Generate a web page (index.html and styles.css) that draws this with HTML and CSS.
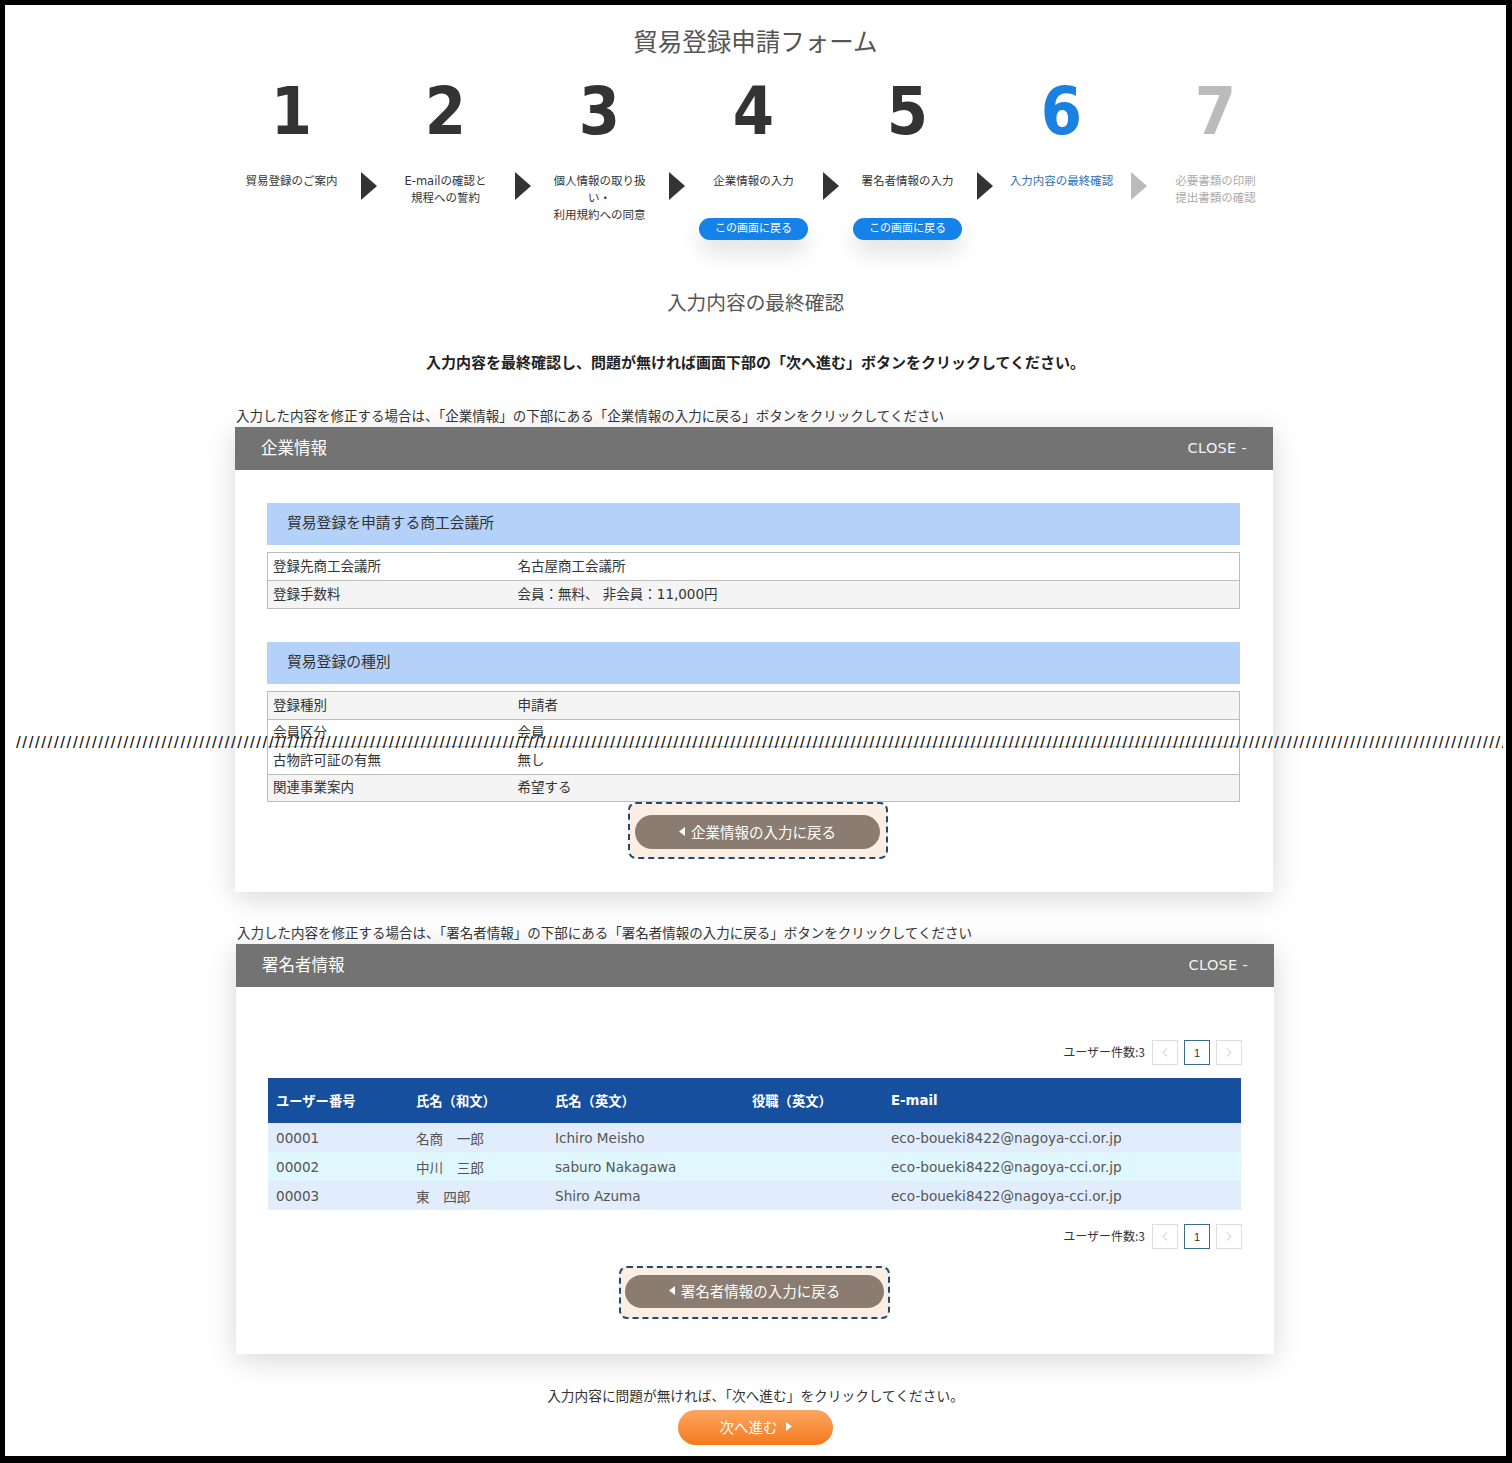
FILE: index.html
```html
<!DOCTYPE html>
<html lang="ja">
<head>
<meta charset="utf-8">
<title>貿易登録申請フォーム</title>
<link rel="stylesheet" href="styles.css">
</head>
<body>
<div class="frame">
  <h1 class="title">貿易登録申請フォーム</h1>

  <ol class="steps">
    <li class="step"><span class="num">1</span><span class="label">貿易登録のご案内</span></li>
    <li class="arrow"><svg width="16" height="28" viewBox="0 0 16 28"><polygon points="0,0 16,14 0,28"/></svg></li>
    <li class="step"><span class="num">2</span><span class="label">E-mailの確認と<br>規程への誓約</span></li>
    <li class="arrow"><svg width="16" height="28" viewBox="0 0 16 28"><polygon points="0,0 16,14 0,28"/></svg></li>
    <li class="step"><span class="num">3</span><span class="label">個人情報の取り扱<br>い・<br>利用規約への同意</span></li>
    <li class="arrow"><svg width="16" height="28" viewBox="0 0 16 28"><polygon points="0,0 16,14 0,28"/></svg></li>
    <li class="step"><span class="num">4</span><span class="label">企業情報の入力</span><a class="step-back">この画面に戻る</a></li>
    <li class="arrow"><svg width="16" height="28" viewBox="0 0 16 28"><polygon points="0,0 16,14 0,28"/></svg></li>
    <li class="step"><span class="num">5</span><span class="label">署名者情報の入力</span><a class="step-back">この画面に戻る</a></li>
    <li class="arrow"><svg width="16" height="28" viewBox="0 0 16 28"><polygon points="0,0 16,14 0,28"/></svg></li>
    <li class="step current"><span class="num">6</span><span class="label">入力内容の最終確認</span></li>
    <li class="arrow pending"><svg width="16" height="28" viewBox="0 0 16 28"><polygon points="0,0 16,14 0,28"/></svg></li>
    <li class="step pending"><span class="num">7</span><span class="label">必要書類の印刷<br>提出書類の確認</span></li>
  </ol>

  <h2 class="subtitle">入力内容の最終確認</h2>
  <p class="lead">入力内容を最終確認し、問題が無ければ画面下部の「次へ進む」ボタンをクリックしてください。</p>

  <section class="block">
    <p class="note">入力した内容を修正する場合は、「企業情報」の下部にある「企業情報の入力に戻る」ボタンをクリックしてください</p>
    <div class="panel">
      <div class="panel-head"><span class="panel-title">企業情報</span><span class="close">CLOSE -</span></div>
      <div class="panel-body">
        <h3 class="sec-head">貿易登録を申請する商工会議所</h3>
        <table class="info">
          <tr class="white"><th>登録先商工会議所</th><td>名古屋商工会議所</td></tr>
          <tr class="gray"><th>登録手数料</th><td>会員：無料、 非会員：11,000円</td></tr>
        </table>
        <h3 class="sec-head second">貿易登録の種別</h3>
        <table class="info compact">
          <tr class="gray"><th>登録種別</th><td>申請者</td></tr>
          <tr class="white"><th>会員区分</th><td>会員</td></tr>
          <tr class="white"><th>古物許可証の有無</th><td>無し</td></tr>
          <tr class="gray"><th>関連事業案内</th><td>希望する</td></tr>
        </table>
        <div class="back-wrap one">
          <button class="back"><svg width="6" height="9" viewBox="0 0 6 9"><polygon points="6,0 0,4.5 6,9"/></svg>企業情報の入力に戻る</button>
        </div>
      </div>
    </div>
  </section>

  <section class="block second-block">
    <p class="note">入力した内容を修正する場合は、「署名者情報」の下部にある「署名者情報の入力に戻る」ボタンをクリックしてください</p>
    <div class="panel">
      <div class="panel-head"><span class="panel-title">署名者情報</span><span class="close">CLOSE -</span></div>
      <div class="panel-body signer">
        <div class="pager">
          <span class="count">ユーザー件数:3</span>
          <span class="pg"><svg width="6" height="9" viewBox="0 0 6 9"><polyline points="5,0.5 1,4.5 5,8.5"/></svg></span>
          <span class="pg active">1</span>
          <span class="pg"><svg width="6" height="9" viewBox="0 0 6 9"><polyline points="1,0.5 5,4.5 1,8.5"/></svg></span>
        </div>
        <table class="users">
          <thead>
            <tr><th class="c1">ユーザー番号</th><th class="c2">氏名（和文）</th><th class="c3">氏名（英文）</th><th class="c4">役職（英文）</th><th>E-mail</th></tr>
          </thead>
          <tbody>
            <tr class="r-blue"><td>00001</td><td>名商　一郎</td><td>Ichiro Meisho</td><td></td><td>eco-boueki8422@nagoya-cci.or.jp</td></tr>
            <tr class="r-cyan"><td>00002</td><td>中川　三郎</td><td>saburo Nakagawa</td><td></td><td>eco-boueki8422@nagoya-cci.or.jp</td></tr>
            <tr class="r-blue"><td>00003</td><td>東　四郎</td><td>Shiro Azuma</td><td></td><td>eco-boueki8422@nagoya-cci.or.jp</td></tr>
          </tbody>
        </table>
        <div class="pager bottom">
          <span class="count">ユーザー件数:3</span>
          <span class="pg"><svg width="6" height="9" viewBox="0 0 6 9"><polyline points="5,0.5 1,4.5 5,8.5"/></svg></span>
          <span class="pg active">1</span>
          <span class="pg"><svg width="6" height="9" viewBox="0 0 6 9"><polyline points="1,0.5 5,4.5 1,8.5"/></svg></span>
        </div>
        <div class="back-wrap two">
          <button class="back"><svg width="6" height="9" viewBox="0 0 6 9"><polygon points="6,0 0,4.5 6,9"/></svg>署名者情報の入力に戻る</button>
        </div>
      </div>
    </div>
  </section>

  <p class="final-note">入力内容に問題が無ければ、「次へ進む」をクリックしてください。</p>
  <div class="next-wrap">
    <button class="next">次へ進む<svg width="6" height="9" viewBox="0 0 6 9"><polygon points="0,0 6,4.5 0,9"/></svg></button>
  </div>

  <div class="cutline">////////////////////////////////////////////////////////////////////////////////////////////////////////////////////////////////////////////////////////////////////////////////////////////////////////////////////////////////////////////////////////////////</div>
</div>
</body>
</html>
```

FILE: styles.css
```css
html, body {
  margin: 0;
  padding: 0;
  background: #000;
}
body {
  width: 1512px;
  height: 1463px;
  overflow: hidden;
  font-family: "DejaVu Sans", "Noto Sans CJK JP", sans-serif;
  color: #333;
}
.frame {
  position: relative;
  margin: 5px 6px 7px 5px;
  height: 1451px;
  background: #fff;
  overflow: hidden;
}
.title {
  margin: 0;
  padding-top: 21px;
  height: 30px;
  line-height: 30px;
  text-align: center;
  font-family: "Noto Sans CJK JP", sans-serif;
  font-weight: 400;
  font-size: 24.5px;
  color: #555;
}

/* steps */
.steps {
  list-style: none;
  margin: 21px 0 0;
  padding: 0 4px 0 0;
  display: flex;
  justify-content: center;
  align-items: flex-start;
}
.step {
  width: 138px;
  display: flex;
  flex-direction: column;
  align-items: center;
}
.num {
  font-family: "Liberation Sans Narrow", "DejaVu Sans Condensed", "Liberation Sans", sans-serif;
  font-weight: 700;
  font-size: 66px;
  line-height: 70px;
  height: 70px;
  color: #333;
}
.label {
  margin-top: 26px;
  min-height: 34px;
  font-size: 11.5px;
  line-height: 17px;
  white-space: nowrap;
  text-align: center;
  color: #333;
}
.step.current .num { color: #1a80e2; }
.step.current .label { color: #2c6fb5; }
.step.pending .num { color: #bbb; }
.step.pending .label { color: #aaa; }
.arrow {
  width: 16px;
  margin-top: 95px;
  height: 28px;
}
.arrow svg { display: block; fill: #333; }
.arrow.pending svg { fill: #bbb; }
.step-back {
  margin-top: 11px;
  width: 109px;
  height: 22px;
  line-height: 22px;
  border-radius: 11px;
  background: #1482e6;
  color: #fff;
  font-size: 11px;
  text-align: center;
  box-shadow: 0 12px 22px rgba(0, 0, 0, 0.13);
}

.subtitle {
  margin: 48px 0 0;
  height: 28px;
  line-height: 28px;
  text-align: center;
  font-family: "Noto Sans CJK JP", sans-serif;
  font-weight: 400;
  font-size: 19.7px;
  color: #555;
}
.lead {
  margin: 35px 0 0;
  line-height: 22px;
  text-align: center;
  font-family: "Noto Sans CJK JP", sans-serif;
  font-weight: 700;
  font-size: 15px;
  color: #222;
}

/* blocks and panels */
.block {
  width: 1038px;
  margin: 33px auto 0 230px;
}
.second-block { margin-top: 31px; margin-left: 231px; }
.note {
  margin: 0 0 3px 1px;
  line-height: 18px;
  font-size: 13.5px;
  font-family: "Noto Sans CJK JP", sans-serif;
  color: #333;
  white-space: nowrap;
}
.panel {
  box-shadow: 0 6px 28px rgba(0, 0, 0, 0.16);
  background: #fff;
}
.panel-head {
  box-sizing: border-box;
  height: 43px;
  background: #737373;
  display: flex;
  align-items: center;
  justify-content: space-between;
  padding: 0 26px 4px 26px;
  color: #fff;
}
.panel-title {
  font-family: "Noto Sans CJK JP", sans-serif;
  font-size: 16.5px;
}
.close {
  font-size: 14.5px;
  letter-spacing: 0.3px;
  color: #f2f2f2;
  padding-top: 3px;
}
.panel-body {
  padding: 33px 33px 33px 32px;
}
.sec-head {
  box-sizing: border-box;
  margin: 0;
  height: 42px;
  line-height: 38px;
  padding-left: 20px;
  background: #b4d2f9;
  font-family: "Noto Sans CJK JP", sans-serif;
  font-weight: 400;
  font-size: 14.8px;
  color: #333;
}
.sec-head.second { margin-top: 33px; }
.info {
  margin-top: 7px;
  width: 100%;
  border-collapse: collapse;
  border: 1px solid #bdbdbd;
  font-size: 13.5px;
  font-family: "DejaVu Sans", "Noto Sans CJK JP", sans-serif;
}
.info th, .info td {
  box-sizing: border-box;
  height: 28px;
  padding: 0 5px 3px;
  text-align: left;
  font-weight: 400;
  border-bottom: 1px solid #bdbdbd;
  color: #333;
}
.info.compact th, .info.compact td { height: 27.5px; }
.info th { width: 245px; }
.info tr.gray { background: #f4f4f4; }
.info tr.white { background: #fff; }

.back-wrap {
  margin: 0 auto;
  box-sizing: border-box;
  border: 2px dashed #1b4a75;
  border-radius: 8px;
  background: #fdeee4;
  display: flex;
  justify-content: center;
}
.back-wrap.one {
  width: 260px;
  height: 57px;
  padding-top: 11px;
  position: relative;
  left: 4px;
}
.back-wrap.two {
  width: 271px;
  height: 53px;
  padding-top: 7px;
  margin-top: 17px;
}
.back {
  border: 0;
  background: #8a7c71;
  color: #fff;
  border-radius: 17px;
  font-family: "Noto Sans CJK JP", sans-serif;
  font-size: 14.5px;
  display: flex;
  align-items: center;
  justify-content: center;
  gap: 6px;
  padding: 0 0 2px;
}
.back-wrap.one .back { width: 245px; height: 34px; }
.back-wrap.two .back { width: 259px; height: 33px; }
.back svg { fill: #fff; }

/* signer panel */
.panel-body.signer { padding-top: 53px; padding-bottom: 35px; }
.pager {
  display: flex;
  justify-content: flex-end;
  align-items: center;
  gap: 6px;
  margin-right: -1px;
}
.pager.bottom { margin-top: 14px; }
.count {
  font-family: "Noto Sans CJK JP", sans-serif;
  font-size: 12px;
  color: #333;
  margin-right: 1px;
  padding-bottom: 2px;
}
.pg {
  box-sizing: border-box;
  width: 26px;
  height: 25px;
  border: 1px solid #ddd;
  display: flex;
  align-items: center;
  justify-content: center;
  font-size: 11px;
  color: #333;
  font-family: "Liberation Sans", sans-serif;
}
.pg svg { fill: none; stroke: #bbb; stroke-width: 1; }
.pg.active { border-color: #3c6b8c; }

.users {
  margin-top: 13px;
  width: 100%;
  border-collapse: collapse;
  font-size: 13.6px;
}
.users th {
  height: 45px;
  background: #174f9f;
  color: #fff;
  text-align: left;
  font-weight: 700;
  font-size: 13.3px;
  padding: 0 0 0 8px;
  font-family: "DejaVu Sans", "Noto Sans CJK JP", sans-serif;
}
.users th.c1 { width: 132px; }
.users th.c2 { width: 131px; }
.users th.c3 { width: 189px; }
.users th.c4 { width: 131px; }
.users td {
  height: 29px;
  padding: 0 0 0 8px;
  color: #555;
  font-family: "DejaVu Sans", "Noto Sans CJK JP", sans-serif;
}
.users tr.r-blue { background: #e1edfc; }
.users tr.r-cyan { background: #e0f7fe; }

.final-note {
  margin: 32px 0 0;
  line-height: 18px;
  text-align: center;
  font-family: "Noto Sans CJK JP", sans-serif;
  font-size: 13.7px;
  color: #333;
}
.next-wrap {
  display: flex;
  justify-content: center;
  margin-top: 6px;
  padding-left: 0;
}
.next {
  width: 155px;
  height: 35px;
  border: 0;
  border-radius: 18px;
  background: linear-gradient(#fba660, #f47a1f);
  color: #fff;
  font-family: "Noto Sans CJK JP", sans-serif;
  font-size: 14.5px;
  display: flex;
  align-items: center;
  justify-content: center;
  gap: 8px;
  padding: 0 0 2px;
}
.next svg { fill: #fff; }

/* torn-screenshot marker overlaid across the page */
.cutline {
  position: absolute;
  left: 11px;
  top: 729px;
  width: 1487px;
  overflow: hidden;
  white-space: nowrap;
  font-family: "Liberation Sans", sans-serif;
  font-weight: 400;
  font-size: 17px;
  line-height: 17px;
  letter-spacing: 1.6px;
  color: #111;
}
```
